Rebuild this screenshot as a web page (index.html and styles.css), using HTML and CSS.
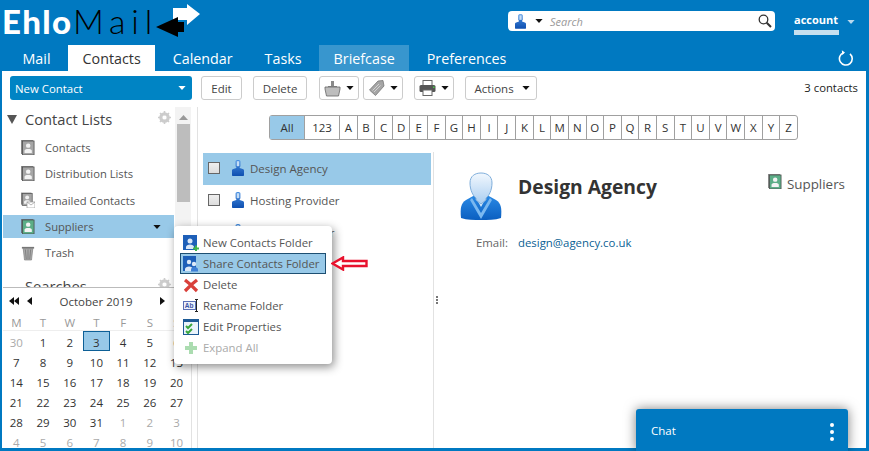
FILE: index.html
```html
<!DOCTYPE html>
<html lang="en">
<head>
<meta charset="utf-8">
<title>EhloMail Contacts</title>
<link rel="stylesheet" href="styles.css">
</head>
<body>
<svg class="defs" width="0" height="0" aria-hidden="true">
  <defs>
    <linearGradient id="person" x1="0" y1="0" x2="0" y2="1"><stop offset="0" stop-color="#4a90e2"/><stop offset="1" stop-color="#0e4fb0"/></linearGradient>
    <symbol id="i-person" viewBox="0 0 12 16">
      <path d="M3.600 1.500C3.600 .5 4.600 0 6 0s2.400 .5 2.400 1.500V6c0 .5-.3 .9-.7 1.100v1l3 .9c.8.3 1.300.8 1.300 1.600V15c0 .6-.4 1-1 1H1c-.6 0-1-.4-1-1v-4.400C0 9.800.5 9.300 1.300 9l3-.9v-1C3.900 6.900 3.600 6.500 3.600 6z" fill="url(#person)"/>
      <path d="M4.700 1.200h2.600V6.200H4.700z" fill="#c6def6"/>
    </symbol>
    <symbol id="i-book" viewBox="0 0 15 16">
      <rect x="0" y="0" width="13" height="15" fill="#555" opacity=".7"/>
      <rect x="1.500" y="1" width="12.500" height="15" fill="currentColor" stroke="#4a4a4a" stroke-width=".8"/>
      <circle cx="7.700" cy="6" r="2.400" fill="#f3f3f3"/>
      <path d="M3.800 14v-2.500c0-1.300 1.500-2 3.900-2s3.900.7 3.900 2V14z" fill="#f3f3f3"/>
    </symbol>
    <symbol id="i-caret" viewBox="0 0 9 5"><path d="M0 0h9L4.500 5z" fill="currentColor"/></symbol>
  </defs>
</svg>

<div class="app">
  <header class="top">
    <div class="logo">
      <span class="logo-a">Ehlo</span><span class="logo-b">Mail</span>
      <svg class="logo-arrows" width="44" height="35" viewBox="0 0 44 35">
        <path d="M17 5h14V1l13 10-13 11v-5H17z" fill="#fff"/>
        <path d="M28 19h-6v-5L0 24l22 10v-5h6z" fill="#000"/>
      </svg>
    </div>
    <div class="search">
      <svg class="s-person" width="11" height="15"><use href="#i-person"/></svg>
      <svg class="caret s-caret" width="8" height="4"><use href="#i-caret"/></svg>
      <span class="s-text">Search</span>
      <svg class="s-glass" width="14" height="14" viewBox="0 0 14 14"><circle cx="5.500" cy="5.500" r="4.300" fill="none" stroke="#333" stroke-width="1.300"/><path d="M8.700 8.700L13 13" stroke="#333" stroke-width="2"/></svg>
    </div>
    <div class="account">
      <span class="acc-name">account</span>
      <svg class="acc-caret" width="8" height="4"><use href="#i-caret"/></svg>
    </div>
  </header>

  <nav class="tabs">
    <a class="tab">Mail</a>
    <a class="tab active">Contacts</a>
    <a class="tab">Calendar</a>
    <a class="tab">Tasks</a>
    <a class="tab hover">Briefcase</a>
    <a class="tab">Preferences</a>
    <svg class="refresh" width="16" height="16" viewBox="0 0 16 16"><path d="M5.500 2.700A6.400 6.400 0 1 0 12 3.800" fill="none" stroke="#fff" stroke-width="1.600"/><path d="M3.800 .2L7 2.400 4.300 5z" fill="#fff"/></svg>
  </nav>

  <main class="content">
    <div class="toolbar">
      <button class="new-contact"><span>New Contact</span><svg class="caret-w" width="8" height="4"><use href="#i-caret"/></svg></button>
      <button class="btn b-edit">Edit</button>
      <button class="btn b-del">Delete</button>
      <button class="btn b-ic b-move">
        <svg width="17" height="17" viewBox="0 0 17 17"><path d="M7 1h3v5h3v3H4V6h3z" fill="#8a8a8a"/><path d="M1 7h15v2l-1.500 7h-12L1 9z" fill="#bdbdbd" stroke="#666" stroke-width=".8"/></svg>
        <svg class="caret" width="8" height="4"><use href="#i-caret"/></svg>
      </button>
      <button class="btn b-ic b-tag">
        <svg width="16" height="16" viewBox="0 0 16 16"><path d="M9 1l5-.5L15 6l-8.500 9.500L.5 10z" fill="#a5a5a5" stroke="#777" stroke-width=".8"/><path d="M3.500 10.500L10 4M5 12l6.500-6.500" stroke="#ddd" stroke-width=".8"/></svg>
        <svg class="caret" width="8" height="4"><use href="#i-caret"/></svg>
      </button>
      <button class="btn b-ic b-print">
        <svg width="17" height="16" viewBox="0 0 17 16"><rect x="4" y="0.500" width="9" height="5" fill="#fff" stroke="#666"/><rect x="0.500" y="5" width="16" height="7" rx="1.500" fill="#555"/><rect x="4" y="10" width="9" height="5.500" fill="#fff" stroke="#666"/><rect x="14" y="6.500" width="1.500" height="1.500" fill="#4c4"/></svg>
        <svg class="caret" width="8" height="4"><use href="#i-caret"/></svg>
      </button>
      <button class="btn b-actions"><span>Actions</span><svg class="caret" width="8" height="4"><use href="#i-caret"/></svg></button>
      <span class="count">3 contacts</span>
    </div>

    <div class="panes">
      <aside class="side">
        <div class="tree">
          <div class="tree-scroll">
            <div class="tree-head first">
              <svg width="10" height="9" viewBox="0 0 10 9"><path d="M0 0h10L5 9z" fill="#555"/></svg>
              <span class="tree-title">Contact Lists</span>
              <svg class="gear" width="13" height="13" viewBox="0 0 13 13"><circle cx="6.500" cy="6.500" r="4" fill="none" stroke="#ccc" stroke-width="2.500"/><path d="M6.500 0v13M0 6.500h13M2 2l9 9M11 2l-9 9" stroke="#ccc" stroke-width="1.600"/><circle cx="6.500" cy="6.500" r="2" fill="#fff"/></svg>
            </div>
            <div class="folder"><svg class="f-ic grey" width="14" height="15"><use href="#i-book"/></svg><span>Contacts</span></div>
            <div class="folder"><svg class="f-ic grey" width="14" height="15"><use href="#i-book"/></svg><span>Distribution Lists</span></div>
            <div class="folder"><svg class="f-ic grey" width="14" height="16" viewBox="0 0 14 16"><use href="#i-book" width="12" height="14"/><rect x="6" y="10" width="8" height="6" fill="#fff" stroke="#999" stroke-width=".7"/><path d="M6 10l4 3 4-3" fill="none" stroke="#999" stroke-width=".7"/></svg><span>Emailed Contacts</span></div>
            <div class="folder sel"><svg class="f-ic green" width="14" height="15"><use href="#i-book"/></svg><span>Suppliers</span><svg class="caret f-caret" width="8" height="4"><use href="#i-caret"/></svg></div>
            <div class="folder"><svg class="f-ic" width="14" height="16" viewBox="0 0 16 16"><path d="M1 1h14v2H1z" fill="#777"/><path d="M2.500 3h11L12 16H4z" fill="#aaa" stroke="#777" stroke-width=".7"/><path d="M5 4l1 11M8 4v11M11 4l-1 11" stroke="#666" stroke-width=".7"/></svg><span>Trash</span></div>
            <div class="tree-head searches">
              <span class="tree-title">Searches</span>
              <svg class="gear" width="13" height="13" viewBox="0 0 13 13"><circle cx="6.500" cy="6.500" r="4" fill="none" stroke="#ccc" stroke-width="2.500"/><path d="M6.500 0v13M0 6.500h13M2 2l9 9M11 2l-9 9" stroke="#ccc" stroke-width="1.600"/><circle cx="6.500" cy="6.500" r="2" fill="#fff"/></svg>
            </div>
          </div>
          <div class="scrollbar">
            <svg width="9" height="5" viewBox="0 0 9 5"><path d="M0 5h9L4.500 0z" fill="#999"/></svg>
            <div class="thumb"></div>
          </div>
        </div>
        <div class="cal">
          <div class="cal-nav">
            <span class="c-arrows"><i class="tri l"></i><i class="tri l"></i></span>
            <span class="c-arrows c-one"><i class="tri l"></i></span>
            <span class="c-month">October 2019</span>
            <span class="c-arrows c-next"><i class="tri r"></i></span>
          </div>
          <div class="cal-grid dow"><span>M</span><span>T</span><span>W</span><span>T</span><span>F</span><span>S</span><span>S</span></div>
          <div class="cal-grid days">
            <span class="off">30</span><span>1</span><span>2</span><span class="today">3</span><span>4</span><span>5</span><span>6</span>
            <span>7</span><span>8</span><span>9</span><span>10</span><span>11</span><span>12</span><span>13</span>
            <span>14</span><span>15</span><span>16</span><span>17</span><span>18</span><span>19</span><span>20</span>
            <span>21</span><span>22</span><span>23</span><span>24</span><span>25</span><span>26</span><span>27</span>
            <span>28</span><span>29</span><span>30</span><span>31</span><span class="off">1</span><span class="off">2</span><span class="off">3</span>
            <span class="off">4</span><span class="off">5</span><span class="off">6</span><span class="off">7</span><span class="off">8</span><span class="off">9</span><span class="off">10</span>
          </div>
        </div>
      </aside>

      <section class="main-pane">
        <div class="alpha">
          <span class="all">All</span><span class="num">123</span><span>A</span><span>B</span><span>C</span><span>D</span><span>E</span><span>F</span><span>G</span><span>H</span><span>I</span><span>J</span><span>K</span><span>L</span><span>M</span><span>N</span><span>O</span><span>P</span><span>Q</span><span>R</span><span>S</span><span>T</span><span>U</span><span>V</span><span>W</span><span>X</span><span>Y</span><span>Z</span>
        </div>
        <div class="split">
          <div class="list">
            <div class="row sel"><i class="check"></i><svg width="12" height="16"><use href="#i-person"/></svg><span>Design Agency</span></div>
            <div class="row"><i class="check"></i><svg width="12" height="16"><use href="#i-person"/></svg><span>Hosting Provider</span></div>
            <div class="row"><i class="check"></i><svg width="12" height="16"><use href="#i-person"/></svg><span>Website Builder</span></div>
          </div>
          <div class="sash"><i></i><i></i><i></i></div>
          <div class="detail">
            <div class="d-head">
              <svg class="d-avatar" width="42" height="48" viewBox="0 0 42 48">
                <defs><linearGradient id="face" x1="0" y1="0" x2="0" y2="1"><stop offset="0" stop-color="#f2f8fe"/><stop offset="1" stop-color="#a9cdf0"/></linearGradient>
                <linearGradient id="body" x1="0" y1="0" x2="0" y2="1"><stop offset="0" stop-color="#2a8ae6"/><stop offset="1" stop-color="#0b5fc0"/></linearGradient></defs>
                <path d="M1 46c-1-10 0-15 5-18l9-5h12l9 5c5 3 6 8 5 18-6 2-13 2-20 2s-14 0-20-2z" fill="url(#body)"/>
                <path d="M15 24l6 11 6-11-2-1H17z" fill="#d9ebfb"/>
                <path d="M12 26l9 15 9-15 2 2-11 19L10 28z" fill="#7ab8f0"/>
                <path d="M10 11C10 4 15 1 21 1s11 3 11 10c0 7-3 13-6 15v2l-5 4-5-4v-2c-3-2-6-8-6-15z" fill="url(#face)" stroke="#7faedb" stroke-width="1"/>
              </svg>
              <h1 class="d-name">Design Agency</h1>
              <div class="d-tag"><svg class="f-ic green" width="14" height="15"><use href="#i-book"/></svg><span>Suppliers</span></div>
            </div>
            <div class="d-row"><span class="d-label">Email:</span><a class="d-val">design@agency.co.uk</a></div>
          </div>
        </div>
      </section>
    </div>

    <div class="menu">
      <div class="m-item"><svg width="16" height="16" viewBox="0 0 16 16"><rect width="14" height="15" fill="#1d5fb8"/><circle cx="7" cy="6" r="2.500" fill="#dbe8f7"/><path d="M3 14v-2c0-1.500 2-2.500 4-2.500s4 1 4 2.500v2z" fill="#dbe8f7"/><path d="M10 12.500h2v-2h2v2h2v2h-2v1.500h-2v-1.500h-2z" fill="#3fb54a"/></svg><span>New Contacts Folder</span></div>
      <div class="m-item hl"><svg width="16" height="16" viewBox="0 0 16 16"><rect width="13" height="15" fill="#1d5fb8"/><circle cx="6" cy="6" r="2.200" fill="#dbe8f7"/><circle cx="11" cy="8" r="2.200" fill="#dbe8f7"/><path d="M2 15v-2c0-1.500 2-2.500 4-2.500s4 1 4 2.500v2z" fill="#dbe8f7"/><path d="M8 15.500v-2c0-1.500 1.500-2.500 3.500-2.500s3.500 1 3.500 2.500v2z" fill="#3d7fd6"/></svg><span>Share Contacts Folder</span></div>
      <div class="m-item"><svg width="16" height="16" viewBox="0 0 16 16"><path d="M2 3l6 5 6-5M2 14l6-6 6 6" fill="none" stroke="#d9403a" stroke-width="3.200"/></svg><span>Delete</span></div>
      <div class="m-item"><svg width="16" height="16" viewBox="0 0 16 16"><rect x="0.500" y="3.500" width="12" height="8" fill="#eef1fa" stroke="#5a6fb5"/><text x="1.700" y="10" font-size="6.500" font-weight="700" font-family="Liberation Sans" fill="#3d57a8">Ab</text><path d="M12 1.500h3M13.500 1.500v12M12 13.500h3" stroke="#222" fill="none"/></svg><span>Rename Folder</span></div>
      <div class="m-item"><svg width="16" height="16" viewBox="0 0 16 16"><rect x="0.500" y="0.500" width="15" height="15" fill="#eaf3fb" stroke="#1d5a96"/><rect x="0.500" y="0.500" width="15" height="2.500" fill="#1d5a96"/><path d="M3 7l2 2 4-4M3 12l2 2 4-4" fill="none" stroke="#3aa63c" stroke-width="2"/></svg><span>Edit Properties</span></div>
      <div class="m-item dis"><svg width="16" height="16" viewBox="0 0 16 16"><path d="M6 2h4v4h4v4h-4v4H6v-4H2V6h4z" fill="#abdcb0"/></svg><span>Expand All</span></div>
    </div>
    <svg class="pointer" width="37" height="15" viewBox="0 0 37 15"><path d="M1.500 7.500L12 1.500v3.500h23.500v5H12v3.500z" fill="#fff" stroke="#e8112d" stroke-width="2.400"/></svg>
  </main>

  <div class="chat"><span>Chat</span><span class="dots"><i></i><i></i><i></i></span></div>
</div>
</body>
</html>
```

FILE: styles.css
```css
* { box-sizing: border-box; }
html, body { margin: 0; height: 100%; }
body { background: #0079c1; font-family: "Open Sans", "Noto Sans", sans-serif; color: #333; overflow: hidden; }
.defs { position: absolute; }
.app { width: 869px; height: 451px; position: relative; overflow: hidden; display: flex; flex-direction: column; }

.top { height: 45px; display: flex; flex: none; }
.logo { width: 508px; height: 45px; display: flex; align-items: flex-start; padding: 3px 0 0 2px; }
.logo-a { font: 900 33px/36px Lato, sans-serif; color: #fff; letter-spacing: 1.300px; width: 71px; flex: none; }
.logo-b { font: 300 34px/36px Lato, sans-serif; color: #000; letter-spacing: 5.800px; width: 83px; flex: none; white-space: nowrap; }
.logo-arrows { flex: none; }
.search { width: 267px; height: 20px; margin-top: 11px; background: #fff; border-radius: 4px; display: flex; align-items: center; padding: 0 3px 0 7px; }
.s-person { flex: none; }
.s-caret { margin-left: 9px; flex: none; }
.s-text { font-size: 11px; font-style: italic; color: #999; margin-left: 7px; flex: 1; }
.account { margin: 11px 0 0 19px; display: flex; align-items: flex-start; color: #fff; }
.acc-name { font-size: 11px; font-weight: 700; line-height: 18px; height: 24px; border-bottom: 5px solid #c5dfef; width: 45px; }
.acc-caret { color: #b9d9ee; margin: 9px 0 0 8px; }
.caret { color: #111; }

.tabs { height: 26px; flex: none; display: flex; gap: 3px; padding-left: 8px; position: relative; }
.tab { padding: 0 14.500px; font-size: 14.300px; line-height: 27px; color: #fff; }
.tab.active { background: #fff; color: #333; }
.tab.hover { background: #3896ce; }
.refresh { position: absolute; left: 838px; top: 5px; }

.content { flex: 1; margin: 0 3px 3px 2px; background: #fff; position: relative; display: flex; flex-direction: column; min-height: 0; }
.toolbar { height: 36px; flex: none; display: flex; align-items: flex-start; padding: 5px 8px 0 8px; font-size: 11.500px; }
button { font: inherit; color: #444; padding: 0; }
.new-contact { width: 182px; height: 24px; background: #0084c4; border: 0; border-radius: 3px; color: #fff; display: flex; justify-content: space-between; align-items: center; padding: 0 6px 0 5px; font-size: 11.400px; }
.caret-w { color: #fff; }
.btn { height: 24px; background: #fff; border: 1px solid #ccc; border-radius: 3px; display: flex; align-items: center; justify-content: center; gap: 5px; }
.b-edit { width: 41px; margin-left: 9px; }
.b-del { width: 54px; margin-left: 11px; }
.b-move { width: 40px; margin-left: 12px; }
.b-tag { width: 40px; margin-left: 4px; }
.b-print { width: 40px; margin-left: 11px; }
.b-actions { width: 72px; margin-left: 11px; gap: 8px; padding-left: 2px; }
.count { margin-left: auto; font-size: 11.300px; line-height: 24px; color: #222; }

.panes { flex: 1; display: flex; min-height: 0; }
.side { width: 196px; flex: none; border-right: 1px solid #e2e2e2; display: flex; flex-direction: column; position: relative; }
.tree { height: 180px; flex: none; display: flex; overflow: hidden; }
.tree-scroll { width: 173px; padding-left: 1px; }
.tree-head { height: 24px; display: flex; align-items: center; padding-left: 4px; }
.tree-head.first { margin-bottom: 3px; }
.tree-title { font-size: 14.700px; color: #444; margin-left: 8px; flex: 1; }
.gear { margin: -4px 3px 0 0; }
.folder { height: 26.500px; display: flex; align-items: center; font-size: 11.200px; color: #555; padding-left: 18px; position: relative; }
.folder > span { margin-left: 10px; }
.folder .f-ic { flex: none; }
.folder.sel { background: #98c9e8; height: 23px; margin: 1px 0 2px; }
.f-ic.grey { color: #a6a6a6; }
.f-ic.green { color: #5cae87; }
.f-caret { position: absolute; right: 13px; top: 10px; }
.searches { margin-top: 8px; }
.searches .tree-title { margin-left: 18px; }
.scrollbar { width: 16px; margin-left: 1px; background: #f3f3f3; display: flex; flex-direction: column; align-items: center; padding-top: 8px; margin-right: 6px; }
.thumb { width: 13px; height: 78px; background: #bdbdbd; margin-top: 4px; }
.cal { flex: 1; margin-right: 5px; border-top: 1px solid #bbb; border-right: 1px solid #e2e2e2; margin-left: 1px; position: relative; overflow: hidden; }
.cal-nav { height: 25px; display: flex; align-items: center; font-size: 11.500px; color: #444; padding: 1px 0 0 6px; position: relative; }
.c-arrows { display: flex; }
.c-one { margin-left: 8px; }
.c-month { margin-left: 22px; width: 84px; text-align: center; }
.c-next { margin-left: 22px; }
.tri { width: 0; height: 0; border-top: 4px solid transparent; border-bottom: 4px solid transparent; display: block; }
.tri.l { border-right: 5px solid #111; }
.tri.r { border-left: 5px solid #111; }
.cal-grid { display: grid; grid-template-columns: repeat(7, 26.700px); text-align: center; font-size: 11.500px; }
.dow { color: #999; line-height: 20px; border-bottom: 1px solid #eee; height: 18px; }
.days span { height: 20px; line-height: 24px; }
.days .off { color: #aaa; }
.days .today { background: #98c9e8; border: 1px solid #0d5f96; line-height: 22px; }

.main-pane { flex: 1; min-width: 0; display: flex; flex-direction: column; }
.alpha { height: 25px; margin: 8px 0 0 71px; flex: none; display: flex; width: 529px; border: 1px solid #a0a0a0; border-radius: 3px; font-size: 11.500px; background: #fff; }
.alpha span { flex: 1; text-align: center; line-height: 23px; border-left: 1px solid #a0a0a0; color: #333; min-width: 0; }
.alpha .all { flex: none; width: 34px; background: #98c9e8; border-left: 0; }
.alpha .num { flex: none; width: 35px; }
.split { flex: 1; display: flex; min-height: 0; margin-top: 13px; }
.list { width: 235px; flex: none; padding-left: 5px; }
.row { height: 32px; display: flex; align-items: center; font-size: 11.500px; color: #555; padding: 0 0 2px 5px; width: 228px; }
.row.sel { background: #98c9e8; }
.check { width: 12px; height: 12px; border: 1px solid #666; background: linear-gradient(#eee, #ddd); display: block; margin-right: 12px; flex: none; }
.row span { margin-left: 6px; }
.sash { width: 6px; flex: none; border-left: 1px solid #e2e2e2; display: flex; flex-direction: column; align-items: center; justify-content: center; gap: 1px; padding-left: 1px; margin-top: -1px; }
.sash i { width: 2px; height: 2px; background: #777; display: block; }
.detail { flex: 1; min-width: 0; padding: 19px 21px 0 25px; margin-left: -4px; }
.d-head { display: flex; align-items: flex-start; height: 63px; }
.d-avatar { flex: none; }
.d-name { font-size: 19.300px; font-weight: 700; color: #333; margin: 1px 0 0 16px; flex: 1; line-height: 27px; }
.d-tag { display: flex; align-items: flex-start; font-size: 13.400px; color: #555; margin-top: 1px; gap: 5px; line-height: 22px; }
.d-tag svg { margin-top: 1px; }
.d-row { display: flex; font-size: 11.400px; padding-left: 16px; }
.d-label { width: 42px; color: #666; }
.d-val { color: #0b5f94; }

.menu { position: absolute; left: 172px; top: 155px; width: 158px; height: 138px; background: #fff; border-radius: 4px; box-shadow: 2px 3px 10px rgba(0,0,0,.45); padding: 6px; display: flex; flex-direction: column; }
.m-item { height: 21px; display: flex; align-items: center; font-size: 11.400px; color: #555; padding-left: 2px; flex: none; border: 1px solid transparent; gap: 4px; white-space: nowrap; }
.m-item.hl { background: #98c9e8; border-color: #1d4f72; }
.m-item.dis { color: #aaa; }
.pointer { position: absolute; left: 329px; top: 185px; }

.chat { position: absolute; left: 636px; top: 409px; width: 212px; height: 42px; background: #0079c1; border-radius: 3px 3px 0 0; box-shadow: 0 0 12px rgba(0,0,0,.5); color: #fff; font-size: 11.500px; display: flex; justify-content: space-between; padding: 14px 14px 0 15px; }
.dots { display: flex; flex-direction: column; gap: 3px; }
.dots i { width: 4px; height: 4px; background: #fff; border-radius: 50%; display: block; }
```
